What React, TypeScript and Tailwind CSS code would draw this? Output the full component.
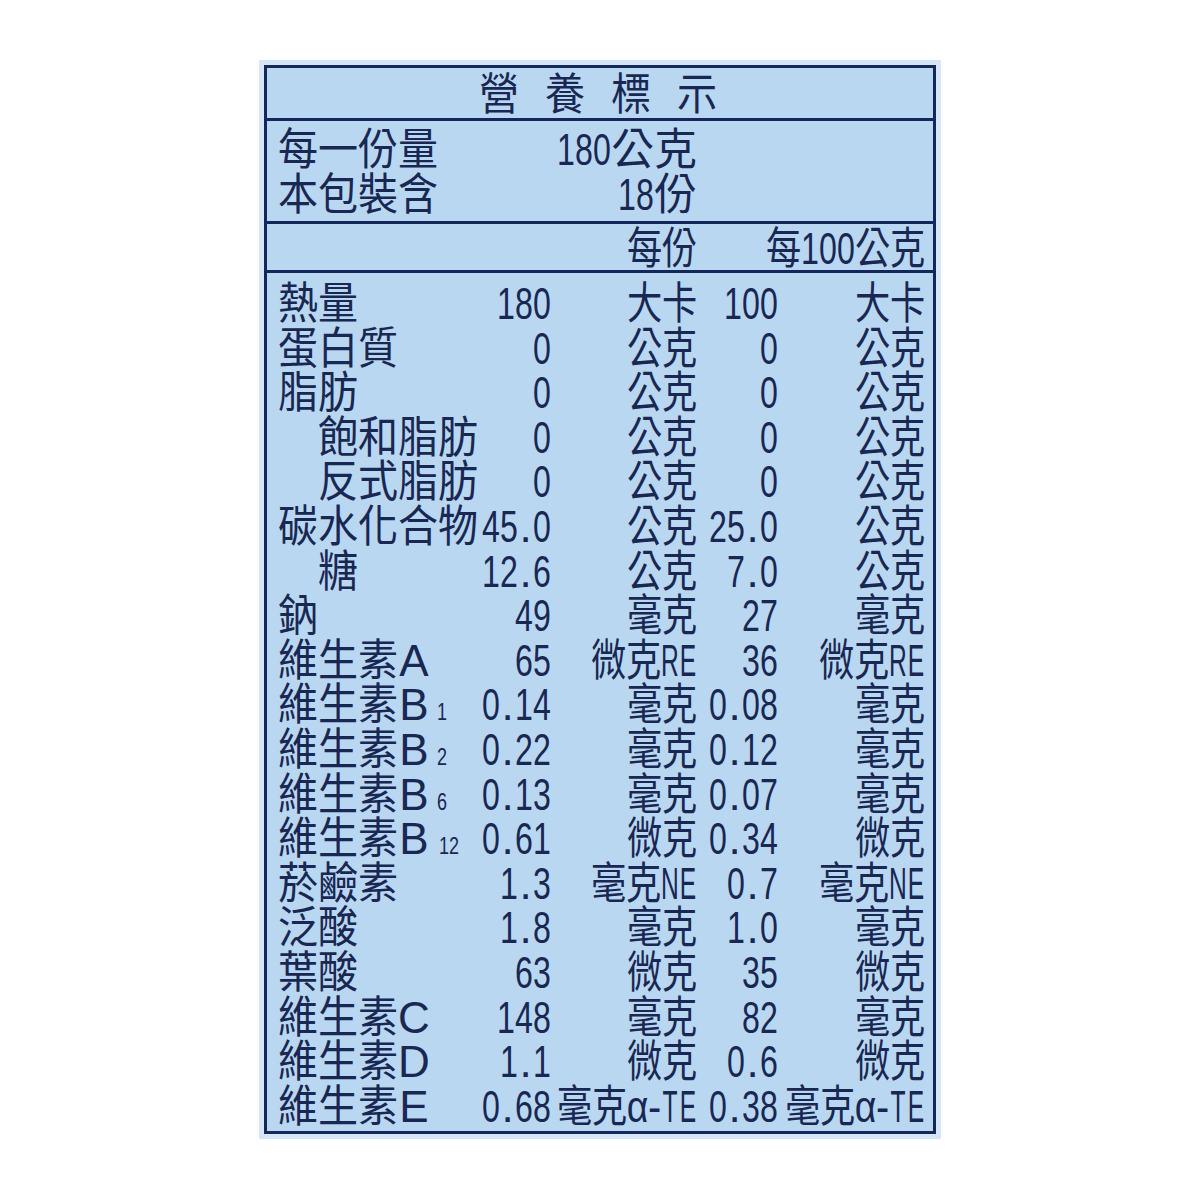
import React from 'react';

type Mode = 'name' | 'tight' | 'wide';

type Row = {
    name: string;
    sub?: string;
    indent?: boolean;
    v1: string;
    u1: string;
    v2: string;
    u2: string;
};

const rows: Row[] = [
    { name: '熱量', v1: '180', u1: '大卡', v2: '100', u2: '大卡' },
    { name: '蛋白質', v1: '0', u1: '公克', v2: '0', u2: '公克' },
    { name: '脂肪', v1: '0', u1: '公克', v2: '0', u2: '公克' },
    { name: '飽和脂肪', indent: true, v1: '0', u1: '公克', v2: '0', u2: '公克' },
    { name: '反式脂肪', indent: true, v1: '0', u1: '公克', v2: '0', u2: '公克' },
    { name: '碳水化合物', v1: '45.0', u1: '公克', v2: '25.0', u2: '公克' },
    { name: '糖', indent: true, v1: '12.6', u1: '公克', v2: '7.0', u2: '公克' },
    { name: '鈉', v1: '49', u1: '毫克', v2: '27', u2: '毫克' },
    { name: '維生素A', v1: '65', u1: '微克RE', v2: '36', u2: '微克RE' },
    { name: '維生素B', sub: '1', v1: '0.14', u1: '毫克', v2: '0.08', u2: '毫克' },
    { name: '維生素B', sub: '2', v1: '0.22', u1: '毫克', v2: '0.12', u2: '毫克' },
    { name: '維生素B', sub: '6', v1: '0.13', u1: '毫克', v2: '0.07', u2: '毫克' },
    { name: '維生素B', sub: '12', v1: '0.61', u1: '微克', v2: '0.34', u2: '微克' },
    { name: '菸鹼素', v1: '1.3', u1: '毫克NE', v2: '0.7', u2: '毫克NE' },
    { name: '泛酸', v1: '1.8', u1: '毫克', v2: '1.0', u2: '毫克' },
    { name: '葉酸', v1: '63', u1: '微克', v2: '35', u2: '微克' },
    { name: '維生素C', v1: '148', u1: '毫克', v2: '82', u2: '毫克' },
    { name: '維生素D', v1: '1.1', u1: '微克', v2: '0.6', u2: '微克' },
    { name: '維生素E', v1: '0.68', u1: '毫克α-TE', v2: '0.38', u2: '毫克α-TE' },
];

const isCjk = (c: string) => c.charCodeAt(0) > 0x2e80;

// the label uses a condensed gothic, so every glyph gets its own box and is squeezed inside it
function glyphClass(c: string, mode: Mode): string {
    if (/[0-9]/.test(c)) return 'w-[18px] scale-x-[0.73]';
    if (c === '.') return 'w-[15px]';
    if (isCjk(c)) {
        if (mode === 'tight') return 'w-[35px] scale-x-[0.8]';
        if (mode === 'wide') return 'w-[43px] scale-x-[0.97]';
        return 'w-[40px] scale-x-[0.91]';
    }
    if (mode === 'name') return 'w-[32px]';
    if (c === 'α') return 'w-[21px] scale-x-[0.85]';
    if (c === '-') return 'w-[13px] scale-x-[0.9]';
    return 'w-[18px] scale-x-[0.56]';
}

function Txt({ s, mode = 'name' }: { s: string; mode?: Mode }) {
    return (
        <>
            {Array.from(s).map((c, i) => (
                <span key={i} className={`inline-flex justify-center ${glyphClass(c, mode)}`}>
                    {c}
                </span>
            ))}
        </>
    );
}

const cols = 'grid grid-cols-[193px_80px_146px_81px_147px] items-baseline';

function DataRow({ row }: { row: Row }) {
    return (
        <div className={`${cols} h-[44.6px]`}>
            <div className={`flex items-baseline whitespace-nowrap ${row.indent ? 'pl-[40px]' : ''}`}>
                <Txt s={row.name} />
                {row.sub && (
                    <span
                        className={`inline-block text-[24px] leading-none origin-left scale-x-[0.75] ${
                            row.sub.length > 1 ? 'ml-[9px]' : 'ml-[7px]'
                        }`}
                    >
                        {row.sub}
                    </span>
                )}
            </div>
            <div className="flex items-baseline justify-end">
                <Txt s={row.v1} />
            </div>
            <div className="flex items-baseline justify-end">
                <Txt s={row.u1} mode="tight" />
            </div>
            <div className="flex items-baseline justify-end">
                <Txt s={row.v2} />
            </div>
            <div className="flex items-baseline justify-end">
                <Txt s={row.u2} mode="tight" />
            </div>
        </div>
    );
}

export default function App() {
    return (
        <div className="w-[1200px] h-[1200px] bg-white pt-[60px] pl-[259px]">
            <div className="w-[682px] p-[5px] bg-[#d4e6f7]">
                <div className="w-[672px] h-[1069px] flex flex-col border-[3px] border-[#15275a] bg-[#bad7f2] text-[#182853] text-[44px] leading-[40px] font-['Liberation_Sans','Noto_Sans_CJK_TC',sans-serif]">
                    {/* title */}
                    <div className="h-[53px] shrink-0 border-b-[3px] border-[#15275a] pt-[7px]">
                        <div className="flex h-[44px] items-baseline justify-center gap-[26px] pr-[4px]">
                            {['營', '養', '標', '示'].map((c) => (
                                <span key={c} className="inline-flex justify-center w-[40px] scale-x-[0.91]">
                                    {c}
                                </span>
                            ))}
                        </div>
                    </div>

                    {/* serving info */}
                    <div className="h-[103px] shrink-0 border-b-[3px] border-[#15275a] pt-[9px] pl-[11px] pr-[8px]">
                        <div className={`${cols} h-[45px]`}>
                            <div className="flex items-baseline">
                                <Txt s="每一份量" />
                            </div>
                            <div className="col-span-2 flex items-baseline justify-end">
                                <Txt s="180公克" mode="wide" />
                            </div>
                        </div>
                        <div className={`${cols} h-[45px]`}>
                            <div className="flex items-baseline">
                                <Txt s="本包裝含" />
                            </div>
                            <div className="col-span-2 flex items-baseline justify-end">
                                <Txt s="18份" mode="wide" />
                            </div>
                        </div>
                    </div>

                    {/* column header */}
                    <div className="h-[49px] shrink-0 border-b-[3px] border-[#15275a] pt-[5px] pl-[11px] pr-[8px]">
                        <div className={`${cols} h-[40px]`}>
                            <div />
                            <div className="col-span-2 flex items-baseline justify-end">
                                <Txt s="每份" mode="tight" />
                            </div>
                            <div className="col-span-2 flex items-baseline justify-end">
                                <Txt s="每100公克" mode="tight" />
                            </div>
                        </div>
                    </div>

                    {/* nutrients */}
                    <div className="flex-1 pt-[11px] pl-[11px] pr-[8px]">
                        {rows.map((row, i) => (
                            <DataRow key={i} row={row} />
                        ))}
                    </div>
                </div>
            </div>
        </div>
    );
}
